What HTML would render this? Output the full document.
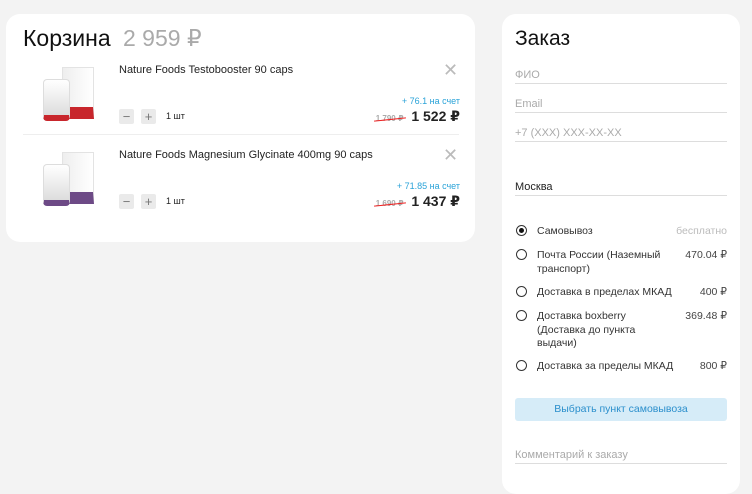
<!DOCTYPE html>
<html><head><meta charset="utf-8"><style>
*{margin:0;padding:0;box-sizing:border-box}
body{width:752px;height:477px;background:#f3f3f3;font-family:"Liberation Sans","DejaVu Sans",sans-serif;position:relative;overflow:hidden;color:#222}
.a{position:absolute}
.card{position:absolute;background:#fff;border-radius:14px}
.sm{font-size:10px}
.q{width:15px;height:15px;background:#eaeaea;border-radius:2px;color:#777;font-size:13px;line-height:15px;text-align:center}
.x{font-size:18px;color:#bbb;font-weight:300}
.in{position:absolute;left:515px;width:212px;border-bottom:1px solid #ddd;font-size:11px;color:#aaa;padding-bottom:2px}
.r{position:absolute;left:516px;width:11px;height:11px;border:1.3px solid #333;border-radius:50%}
.lb{position:absolute;left:537px;font-size:10.5px;color:#333;line-height:13.5px}
.pr{position:absolute;right:25px;font-size:10.5px;color:#444}
.old{font-size:8px;color:#aaa;position:relative}
.old:after{content:"";position:absolute;left:-2px;right:-2px;top:50%;border-top:1.5px solid #e22;transform:rotate(-6deg)}
.img{position:absolute}
.jar{position:absolute;background:linear-gradient(#fff,#ddd);border:1px solid #ddd;border-radius:4px}
.box{position:absolute;background:linear-gradient(90deg,#eee,#fff);border:1px solid #e3e3e3}
.t{position:absolute;left:119px;font-size:11px}
</style></head><body>
<div class="card" style="left:6px;top:14px;width:469px;height:228px"></div>
<div class="a" style="left:23px;top:25px;font-size:23px;color:#111">Корзина <span style="color:#aaa;margin-left:6px">2 959 ₽</span></div>

<div class="img" style="left:38px;top:65px;width:58px;height:58px">
<div class="box" style="left:24px;top:2px;width:32px;height:52px;border-bottom:12px solid #c8262c"></div>
<div class="jar" style="left:5px;top:14px;width:27px;height:42px;border-bottom:6px solid #c8262c"></div>
</div>
<div class="t" style="top:64px">Nature Foods Testobooster 90 caps</div>
<div class="a x" style="left:443px;top:60px">✕</div>
<div class="a q" style="left:119px;top:109px">−</div>
<div class="a q" style="left:141px;top:109px">+</div>
<div class="a sm" style="left:166px;top:111px;font-size:9px">1 шт</div>
<div class="a" style="right:292px;top:96px;font-size:9px;color:#2aa3d8">+ 76.1 на счет</div>
<div class="a" style="right:292px;top:108px;font-size:14px;font-weight:bold"><span class="old">1 790 ₽</span>&nbsp; 1 522 ₽</div>
<div class="a" style="left:23px;top:134px;width:436px;border-top:1px solid #eee"></div>

<div class="img" style="left:38px;top:150px;width:58px;height:58px">
<div class="box" style="left:24px;top:2px;width:32px;height:52px;border-bottom:12px solid #6d4a86"></div>
<div class="jar" style="left:5px;top:14px;width:27px;height:42px;border-bottom:6px solid #6d4a86"></div>
</div>
<div class="t" style="top:149px">Nature Foods Magnesium Glycinate 400mg 90 caps</div>
<div class="a x" style="left:443px;top:145px">✕</div>
<div class="a q" style="left:119px;top:194px">−</div>
<div class="a q" style="left:141px;top:194px">+</div>
<div class="a sm" style="left:166px;top:196px;font-size:9px">1 шт</div>
<div class="a" style="right:292px;top:181px;font-size:9px;color:#2aa3d8">+ 71.85 на счет</div>
<div class="a" style="right:292px;top:193px;font-size:14px;font-weight:bold"><span class="old">1 690 ₽</span>&nbsp; 1 437 ₽</div>

<div class="card" style="left:502px;top:14px;width:238px;height:480px"></div>
<div class="a" style="left:515px;top:27px;font-size:21px;color:#111">Заказ</div>
<div class="in" style="top:69px">ФИО</div>
<div class="in" style="top:98px">Email</div>
<div class="in" style="top:127px">+7 (XXX) XXX-XX-XX</div>
<div class="in" style="top:181px;color:#222">Москва</div>

<div class="r" style="top:225px"><div style="position:absolute;left:2px;top:2px;width:5px;height:5px;background:#111;border-radius:50%"></div></div>
<div class="lb" style="top:225px">Самовывоз</div><div class="pr" style="top:225px;color:#bbb">бесплатно</div>
<div class="r" style="top:249px"></div>
<div class="lb" style="top:249px">Почта России (Наземный<br>транспорт)</div><div class="pr" style="top:249px">470.04 ₽</div>
<div class="r" style="top:286px"></div>
<div class="lb" style="top:286px">Доставка в пределах МКАД</div><div class="pr" style="top:286px">400 ₽</div>
<div class="r" style="top:310px"></div>
<div class="lb" style="top:310px">Доставка boxberry<br>(Доставка до пункта<br>выдачи)</div><div class="pr" style="top:310px">369.48 ₽</div>
<div class="r" style="top:360px"></div>
<div class="lb" style="top:360px">Доставка за пределы МКАД</div><div class="pr" style="top:360px">800 ₽</div>

<div class="a" style="left:515px;top:398px;width:212px;height:23px;background:#d6ecf8;border-radius:3px;color:#2b8fcc;font-size:10.5px;text-align:center;line-height:23px">Выбрать пункт самовывоза</div>
<div class="in" style="top:449px">Комментарий к заказу</div>
</body></html>
